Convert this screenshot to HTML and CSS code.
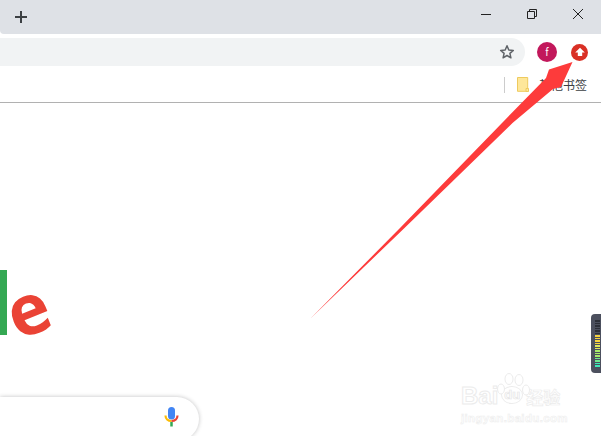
FILE: index.html
```html
<!DOCTYPE html>
<html lang="zh">
<head>
<meta charset="utf-8">
<title>Google</title>
<link rel="stylesheet" href="styles.css">
</head>
<body>
<div class="browser">
  <header class="tabstrip">
    <svg class="newtab" width="14" height="14" viewBox="0 0 14 14"><path d="M7 1v12M1 7h12" stroke="#3c4043" stroke-width="2" fill="none"/></svg>
    <div class="winctl">
      <svg width="12" height="12" viewBox="0 0 12 12"><path d="M1 6.500h10" stroke="#222" stroke-width="1" fill="none"/></svg>
      <svg width="12" height="12" viewBox="0 0 12 12"><path d="M1.500 3.500h7v7h-7zM3.500 3.500v-2h7v7h-2" stroke="#222" stroke-width="1" fill="none"/></svg>
      <svg width="12" height="12" viewBox="0 0 12 12"><path d="M1 1l10 10M11 1L1 11" stroke="#222" stroke-width="1" fill="none"/></svg>
    </div>
  </header>
  <div class="toolbar">
    <div class="omnibox">
      <svg width="16" height="16" viewBox="0 0 16 16"><path d="M8 1.800l1.800 4.200 4.500.4-3.400 3 1 4.400L8 11.500l-3.900 2.300 1-4.400-3.400-3 4.500-.4z" stroke="#5f6368" stroke-width="1.500" fill="none" stroke-linejoin="round"/></svg>
    </div>
    <div class="avatar">f</div>
    <div class="ext">
      <svg width="10" height="10" viewBox="0 0 10 10"><path d="M5 .8L9.800 5.400H7.200V9H2.800V5.400H.2z" fill="#fff"/></svg>
    </div>
  </div>
  <div class="bookmarks">
    <span class="divider"></span>
    <svg class="folder" width="12" height="15" viewBox="0 0 12 15"><path d="M.5.500h10.200v13.800H.5z" fill="#fee79a" stroke="#eeca5e"/><path d="M9 11.500h2.500v3H9z" fill="#fee79a" stroke="#eeca5e"/></svg>
    <span class="bm-label">其他书签</span>
  </div>
  <main class="page">
    <div class="logo"><span class="logo-l"></span><span class="logo-e">e</span></div>
    <div class="searchbox">
      <svg width="15" height="20" viewBox="0 0 15 20"><rect x="4" y="0" width="7" height="12.500" rx="3.500" fill="#4285f4"/><path d="M1.500 8.500c0 3 2.300 5.500 6 5.500" stroke="#fbbc05" stroke-width="2.200" fill="none"/><path d="M13.500 8.500c0 3-2.300 5.500-6 5.500" stroke="#ea4335" stroke-width="2.200" fill="none"/><path d="M7.500 15v4.500" stroke="#34a853" stroke-width="2.500" fill="none"/></svg>
    </div>
    <div class="meter">
      <i class="seg off"></i><i class="seg off"></i><i class="seg off"></i><i class="seg off"></i><i class="seg off"></i><i class="seg off"></i>
      <i class="seg y1"></i><i class="seg y1"></i><i class="seg y1"></i><i class="seg y1"></i><i class="seg y2"></i><i class="seg y2"></i>
      <i class="seg g1"></i><i class="seg g1"></i><i class="seg g1"></i><i class="seg g2"></i><i class="seg g2"></i><i class="seg t1"></i><i class="seg t1"></i>
    </div>
    <div class="watermark">
      <div class="wm-top"><span>Bai</span><span class="wm-du">du</span><span class="wm-cn">经验</span></div>
      <svg class="wm-paw" width="34" height="26" viewBox="0 0 34 26"><g fill="#fff" stroke="#ececec" stroke-width="1"><ellipse cx="5" cy="17" rx="3.500" ry="5"/><ellipse cx="13" cy="7" rx="4" ry="5.500"/><ellipse cx="23" cy="8" rx="4" ry="5.500"/><ellipse cx="30" cy="18" rx="3.500" ry="5"/></g></svg>
      <div class="wm-url">jingyan.baidu.com</div>
    </div>
  </main>
  <svg class="arrow" width="601" height="436" viewBox="0 0 601 436"><path d="M310.500 318.500L400 228 502 123 546 78 549 69.500 572.500 62 561 87 553 89 512.500 123 404.500 228z" fill="#fd3b3b"/></svg>
</div>
</body>
</html>
```

FILE: styles.css
```css
html, body { margin: 0; padding: 0; }
body { width: 601px; height: 436px; overflow: hidden; background: #fff; font-family: "Liberation Sans", "Noto Sans CJK SC", sans-serif; }
.browser { position: relative; display: flex; flex-direction: column; height: 436px; }

.tabstrip { height: 34px; flex: none; display: flex; align-items: center; justify-content: space-between; background: #dee1e6; padding: 0 17px 0 14px; box-sizing: border-box; border-bottom-left-radius: 4px; }
.newtab { flex: none; }
.winctl { display: flex; gap: 34px; margin-top: -6px; }

.toolbar { height: 33px; flex: none; display: flex; align-items: center; padding-top: 3px; box-sizing: border-box; }
.omnibox { width: 525px; height: 28px; box-sizing: border-box; background: #f1f3f4; border-radius: 0 14px 14px 0; display: flex; align-items: center; justify-content: flex-end; padding-right: 10px; }
.avatar { width: 20px; height: 20px; border-radius: 50%; background: #c2185b; color: #fff; font-size: 10px; display: flex; align-items: center; justify-content: center; margin-left: 12px; font-family: "Roboto", sans-serif; }
.ext { width: 17px; height: 17px; border-radius: 50%; background: #d93025; display: flex; align-items: center; justify-content: center; margin-left: 14px; }

.bookmarks { height: 36px; flex: none; display: flex; align-items: center; box-sizing: border-box; border-bottom: 1px solid #b1b1b1; padding-left: 504px; }
.divider { width: 1px; height: 16px; background: #ccc; }
.folder { margin-left: 12px; }
.bm-label { font-size: 12px; margin-left: 10px; color: #3c4043; font-family: "Noto Sans CJK SC", sans-serif; white-space: nowrap; }

.page { position: relative; flex: 1; overflow: hidden; display: flex; flex-direction: column; }
.logo { flex: none; display: flex; height: 115px; margin-top: 143px; }
.logo-l { width: 7px; height: 65px; margin-top: 24px; background: #34a853; }
.logo-e { font-family: "Open Sans", sans-serif; font-weight: 700; font-size: 70px; line-height: 100px; height: 100px; margin-top: 11px; color: #ea4335; margin-left: 4px; transform: rotate(-22deg); transform-origin: 50% 62%; }
.searchbox { flex: none; width: 199px; height: 44px; margin-top: 36px; box-sizing: border-box; background: #fff; border-radius: 0 22px 22px 0; box-shadow: 0 0 4px rgba(32,33,36,.28); display: flex; align-items: center; justify-content: flex-end; padding: 0 20px 5px 0; }

.meter { position: absolute; right: -2px; top: 211px; width: 12px; height: 59px; box-sizing: border-box; background: #4c505e; border-radius: 4px 0 0 4px; padding: 6px 2px 6px 4px; display: flex; flex-direction: column; justify-content: space-between; }
.seg { display: block; width: 5px; height: 1.500px; }
.off { background: #2c2f38; }
.y1 { background: #f5d33f; }
.y2 { background: #dfe85a; }
.g1 { background: #a8ea6a; }
.g2 { background: #6fe88e; }
.t1 { background: #3de8b8; }

.watermark { position: absolute; left: 461px; top: 281px; width: 110px; color: #fff; font-family: "Liberation Sans", sans-serif; }
.wm-top { display: flex; align-items: flex-end; font-size: 24px; font-weight: 700; line-height: 24px; color: #fff; -webkit-text-stroke: 1px #ececec; }
.wm-du { font-size: 13px; line-height: 16px; margin: 0 3px 4px 3px; padding: 0 2px; -webkit-text-stroke: .7px #e6e6e6; border: 1px solid #ececec; border-radius: 50%; }
.wm-cn { font-size: 17px; line-height: 22px; font-family: "Noto Sans CJK SC", sans-serif; -webkit-text-stroke: .7px #ececec; }
.wm-paw { position: absolute; left: 35px; top: -12px; }
.wm-url { font-size: 11.500px; line-height: 14px; margin-top: 3px; letter-spacing: .35px; font-weight: 700; color: #fff; -webkit-text-stroke: .6px #eeeeee; white-space: nowrap; }

.arrow { position: absolute; left: 0; top: 0; pointer-events: none; }
```
